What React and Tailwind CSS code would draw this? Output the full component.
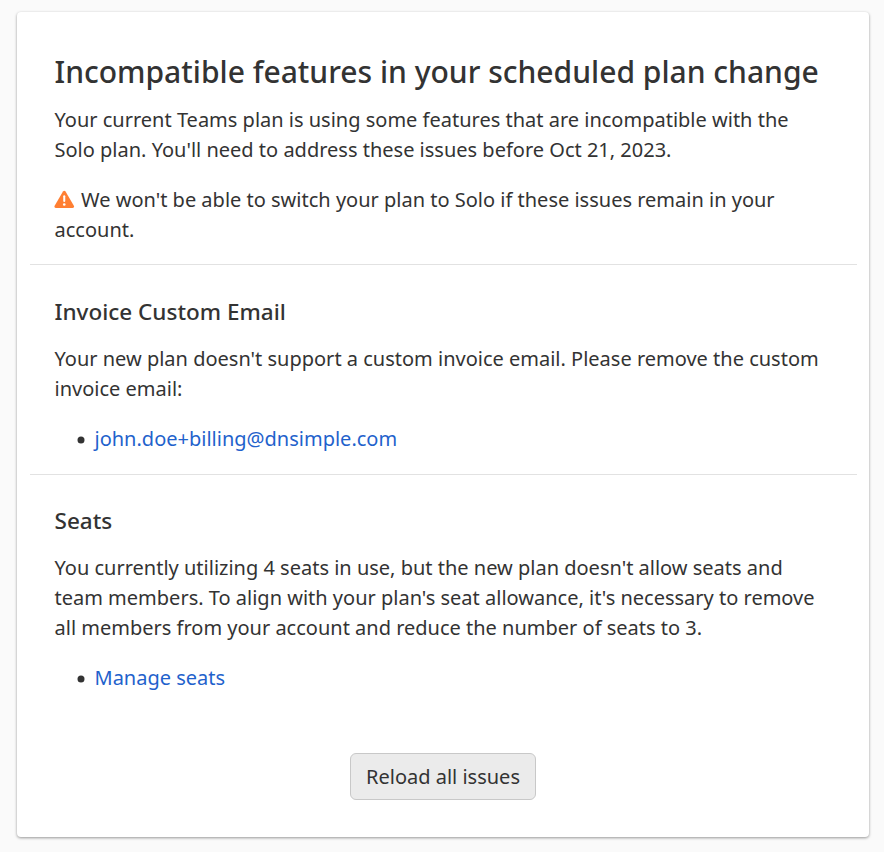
import React from "react";

function WarningIcon() {
  return (
    <svg viewBox="0 -0.5 20 18" className="mr-[6.5px] -ml-[0.5px] inline h-[18px] w-[20.5px] align-[-1px]" aria-hidden="true">
      <path
        d="M8.7 1.1 Q10 -0.7 11.3 1.1 L19.6 15.2 Q20.5 17.5 18.4 17.5 H1.6 Q-0.5 17.5 0.4 15.2 Z"
        fill="#ff7f32"
      />
      <path d="M10 5.8V10.6" stroke="#fff" strokeWidth="2" strokeLinecap="round" />
      <circle cx="10" cy="14" r="1.3" fill="#fff" />
    </svg>
  );
}

function Issue({ title, children, action }) {
  return (
    <section className="mr-[12px] ml-[13px] border-t border-[#e2e2e2] pr-[25px] pb-[20px] pl-[24.5px]">
      <h2 className="pt-[31.2px] text-[22.5px] font-medium leading-[30px]">{title}</h2>
      <p className="mt-[17px]">{children}</p>
      <ul className="mt-[20px] pl-[22.5px]">
        <li className="flex items-center">
          <svg viewBox="0 0 8 8" className="mt-[2px] mr-[9.5px] h-[8px] w-[8px]" aria-hidden="true">
            <circle cx="4" cy="4" r="3.5" fill="#333" />
          </svg>
          <a href="#" className="text-[#1f62cc]">{action}</a>
        </li>
      </ul>
    </section>
  );
}

export default function App() {
  return (
    <div className="h-[852px] bg-[#fafafa] pt-[12px] pl-[17px] font-['Noto_Sans',sans-serif] text-[20px] leading-[30px] text-[#333]">
      <main className="h-[825px] w-[852px] rounded-[4px] bg-white shadow-[0_1px_3px_rgba(0,0,0,0.4)]">
        <header className="pr-[38px] pl-[37.5px] pt-[38px] pb-[19.4px]">
          <h1 className="whitespace-nowrap text-[30.04px] font-medium leading-[44px]">
            Incompatible features in your scheduled plan change
          </h1>
          <p className="mt-[11px]">
            Your current Teams plan is using some features that are incompatible with the
            <br />
            Solo plan. You'll need to address these issues before Oct 21, 2023.
          </p>
          <p className="mt-[20px]">
            <WarningIcon />
            We won't be able to switch your plan to Solo if these issues remain in your
            <br />
            account.
          </p>
        </header>
        <Issue title="Invoice Custom Email" action="john.doe+billing@dnsimple.com">
          Your new plan doesn't support a custom invoice email. Please remove the custom
          <br />
          invoice email:
        </Issue>
        <Issue title="Seats" action="Manage seats">
          You currently utilizing 4 seats in use, but the new plan doesn't allow seats and
          <br />
          team members. To align with your plan's seat allowance, it's necessary to remove
          <br />
          all members from your account and reduce the number of seats to 3.
        </Issue>
        <div className="mt-[40.4px] flex justify-center">
          <button className="h-[47px] w-[186px] rounded-[6px] border border-[#c8c8c8] bg-[#ebebeb]">
            Reload all issues
          </button>
        </div>
      </main>
    </div>
  );
}
